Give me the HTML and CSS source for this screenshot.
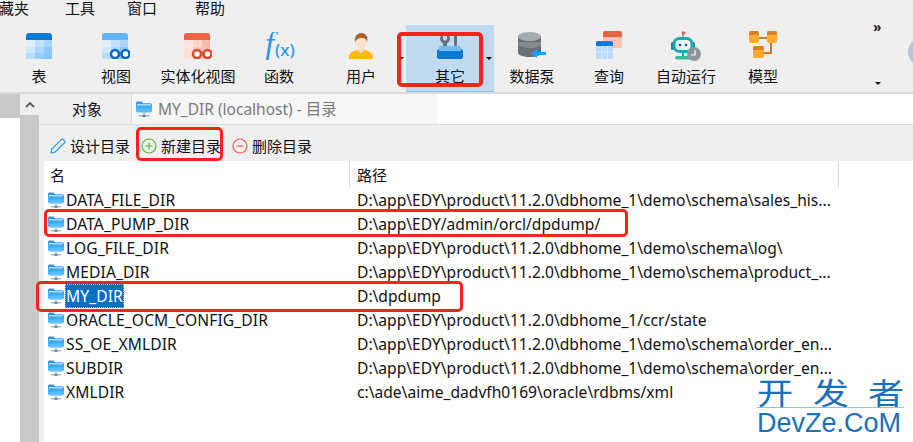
FILE: index.html
```html
<!DOCTYPE html>
<html lang="zh">
<head>
<meta charset="utf-8">
<title>MY_DIR (localhost) - 目录</title>
<link rel="stylesheet" href="styles.css">
</head>
<body>
<svg class="defs" width="0" height="0" aria-hidden="true">
  <defs>
    <linearGradient id="fold" x1="0" y1="0" x2="0" y2="1"><stop offset="0" stop-color="#1f94ea"/><stop offset="1" stop-color="#62c4fc"/></linearGradient>
    <symbol id="dir" viewBox="0 0 16 17">
      <path d="M0 2a1.5 1.5 0 0 1 1.5-1.5h4L7 2.2h7.500a1.500 1.500 0 0 1 1.500 1.500V10a1.500 1.500 0 0 1-1.500 1.500h-13A1.500 1.500 0 0 1 0 10z" fill="url(#fold)"/>
      <path d="M1 3.800h14" stroke="#e4f4ff" stroke-width="1"/>
      <path d="M8 11.500v3M2.500 14.800h11" stroke="#7f99ad" stroke-width="1"/>
      <rect x="6.500" y="13.800" width="3" height="2.200" fill="#5f86a6"/>
    </symbol>
    <symbol id="grid" viewBox="0 0 26 26">
      <rect width="26" height="26" rx="3" fill="#b8dcff"/>
      <rect y="7" width="9" height="7" fill="#e0f0ff"/><rect x="9" y="7" width="9" height="7" fill="#c2e1ff"/><rect x="18" y="7" width="8" height="7" fill="#a9d4fd"/>
      <rect y="14" width="9" height="6" fill="#cfe7ff"/><rect x="9" y="14" width="9" height="6" fill="#aed7ff"/><rect x="18" y="14" width="8" height="6" fill="#8fc9fb"/>
      <rect y="20" width="9" height="6" fill="#b8dcff"/><rect x="9" y="20" width="9" height="6" fill="#97ccfd"/><rect x="18" y="20" width="8" height="6" fill="#8cc6f8"/>
    </symbol>
  </defs>
</svg>
<div class="page">
  <nav class="menu">
    <span class="menu-first">藏夹</span><span class="menu-tools">工具</span><span class="menu-window">窗口</span><span class="menu-help">帮助</span>
  </nav>

  <section class="toolbar">
    <div class="tool">
      <svg class="ico" viewBox="0 0 26 26"><use href="#grid"/><path d="M0 7V3a3 3 0 0 1 3-3h20a3 3 0 0 1 3 3v4z" fill="#0a7bd6"/></svg>
      <span>表</span>
    </div>
    <div class="tool">
      <svg class="ico" viewBox="0 0 28 26"><use href="#grid" width="26" height="26"/><path d="M0 7V3a3 3 0 0 1 3-3h20a3 3 0 0 1 3 3v4z" fill="#62b4f4"/><circle cx="13" cy="21" r="4" fill="#fff" stroke="#0a6cc0" stroke-width="2.600"/><circle cx="23.500" cy="21" r="4" fill="#fff" stroke="#0a6cc0" stroke-width="2.600"/><path d="M16 20h4" stroke="#0a6cc0" stroke-width="2"/></svg>
      <span>视图</span>
    </div>
    <div class="tool">
      <svg class="ico" viewBox="0 0 28 26"><rect width="26" height="26" rx="3" fill="#fbc4b6"/><rect y="7" width="9" height="7" fill="#fde6df"/><rect x="9" y="7" width="9" height="7" fill="#fcd6cb"/><rect x="18" y="7" width="8" height="7" fill="#f9b9a8"/><rect y="14" width="9" height="12" fill="#fde0d8"/><path d="M0 7V3a3 3 0 0 1 3-3h20a3 3 0 0 1 3 3v4z" fill="#ee6246"/><circle cx="13" cy="21" r="4" fill="#fff" stroke="#d9492e" stroke-width="2.600"/><circle cx="23.500" cy="21" r="4" fill="#fff" stroke="#d9492e" stroke-width="2.600"/><path d="M16 20h4" stroke="#d9492e" stroke-width="2"/></svg>
      <span>实体化视图</span>
    </div>
    <div class="tool">
      <svg class="ico ico-fx" viewBox="0 0 34 28"><text class="fx-f" x="3" y="23">f</text><text class="fx-x" x="13" y="24">(x)</text></svg>
      <span>函数</span>
    </div>
    <div class="tool">
      <svg class="ico ico-user" viewBox="0 0 24 26"><path d="M0 26v-2c0-4 4-6 8-7l4 2 4-2c4 1 8 3 8 7v2z" fill="#fdb813"/><path d="M9 14h6v4l-3 2-3-2z" fill="#f6d9c0"/><ellipse cx="12" cy="9" rx="6" ry="7.500" fill="#fbe3d0"/><path d="M6 9C5 3 9 0 12 0s8 2 6 9c-1-3-2-4-4-4-3 0-6 0-8 4z" fill="#a8622c"/></svg>
      <span>用户</span>
    </div>
    <div class="tool tool-on">
      <svg class="ico ico-other" viewBox="0 0 26 26"><path d="M6 0v5l2 2 2-2V0c2 1 3 3 3 5s-2 4-3 4.500V16H6V9.500C5 9 3 7 3 5s1-4 3-5z" fill="#6d7278"/><path d="M17 0h3v9l-.500 7h-2L17 9z" fill="#6d7278"/><rect x="0" y="15" width="26" height="10" rx="2" fill="#0f78d4"/><path d="M2 14a2 2 0 0 1 2-2h18a2 2 0 0 1 2 2v3H2z" fill="#72bdf6"/></svg>
      <span>其它</span>
    </div>
    <div class="tool">
      <svg class="ico ico-pump" viewBox="0 0 28 26"><path d="M0 4v17c0 2 6 4 12 4 7 0 11-2 11-4V4z" fill="#6a6f75"/><path d="M0 12c0 2 6 4 12 4s11-2 11-4v-2H0z" fill="#85898e"/><ellipse cx="11.500" cy="4.500" rx="11.500" ry="4.500" fill="#a8abae"/><path d="M28 20h-9v-3l-6 4.500 6 4.500v-3h9z" fill="#2a9bea"/></svg>
      <span>数据泵</span>
    </div>
    <div class="tool">
      <svg class="ico ico-query" viewBox="0 0 26 28"><rect x="7" y="0" width="19" height="17" rx="2" fill="#fdc5b6"/><path d="M7 6V2a2 2 0 0 1 2-2h15a2 2 0 0 1 2 2v4z" fill="#ea6244"/><rect x="0" y="10" width="17" height="18" rx="2" fill="#b7dcff"/><path d="M0 15v-3a2 2 0 0 1 2-2h13a2 2 0 0 1 2 2v3z" fill="#0a78d6"/><path d="M6 15v13M11.500 15v13M0 21h17" stroke="#d9ecff" stroke-width="1"/></svg>
      <span>查询</span>
    </div>
    <div class="tool">
      <svg class="ico ico-robot" viewBox="0 0 30 30"><path d="M12 1v6" stroke="#7d8a90" stroke-width="1.500"/><circle cx="12.500" cy="2" r="1.800" fill="#ee5a4a"/><rect x="0" y="11" width="3" height="8" rx="1.500" fill="#15828f"/><rect x="21" y="11" width="3" height="8" rx="1.500" fill="#15828f"/><rect x="1.500" y="6" width="21" height="16" rx="7" fill="#1ea7ae"/><rect x="4.500" y="9" width="15" height="10" rx="4" fill="#e8f4fa"/><circle cx="9" cy="14" r="1.300" fill="#1c4e80"/><circle cx="15" cy="14" r="1.300" fill="#1c4e80"/><path d="M12 22v3" stroke="#1ea7ae" stroke-width="2"/><rect x="4" y="25" width="16" height="3.500" rx="1.700" fill="#35bd9c"/><circle cx="23" cy="23" r="7" fill="#8f979c"/><path d="M24 19v5h-4" fill="none" stroke="#fff" stroke-width="1.200"/></svg>
      <span>自动运行</span>
    </div>
    <div class="tool">
      <svg class="ico ico-model" viewBox="0 0 28 28"><path d="M9 7h10M22 12v10h-9" fill="none" stroke="#c87a34" stroke-width="2"/><rect x="0" y="0" width="10" height="12" rx="2" fill="#ffab2e"/><rect x="18" y="0" width="10" height="12" rx="2" fill="#ffab2e"/><rect x="4" y="15" width="11" height="12" rx="2" fill="#ffab2e"/><path d="M0 4V2a2 2 0 0 1 2-2h6a2 2 0 0 1 2 2v2zM18 4V2a2 2 0 0 1 2-2h6a2 2 0 0 1 2 2v2zM4 19v-2a2 2 0 0 1 2-2h7a2 2 0 0 1 2 2v2z" fill="#d9812c"/></svg>
      <span>模型</span>
    </div>
  </section>

  <main class="main">
    <div class="gutter"><div class="gutter-block"></div></div>
    <div class="rail">
      <div class="rail-head"><svg class="chev" viewBox="0 0 10 6"><path d="M1 5l4-4 4 4" fill="none" stroke="#555b62" stroke-width="1.800"/></svg></div>
    </div>
    <div class="content">
      <div class="tabs">
        <div class="tab-objects">对象</div>
        <div class="tab-active"><svg class="dir-ico" viewBox="0 0 16 17"><use href="#dir"/></svg><span>MY_DIR (localhost) - 目录</span></div>
      </div>
      <div class="actions">
        <div class="act"><svg class="act-ico" viewBox="0 0 16 16"><path d="M1 15l.800-4L11.500 1.300a1 1 0 0 1 1.400 0l1.800 1.800a1 1 0 0 1 0 1.400L5 14.200z" fill="none" stroke="#2f9be6" stroke-width="1.200"/></svg><span>设计目录</span></div>
        <div class="act"><svg class="act-ico" viewBox="0 0 16 16"><circle cx="8" cy="8" r="7" fill="none" stroke="#5cb531" stroke-width="1.200"/><path d="M8 4.500v7M4.500 8h7" stroke="#5cb531" stroke-width="1.200"/></svg><span>新建目录</span></div>
        <div class="act"><svg class="act-ico" viewBox="0 0 16 16"><circle cx="8" cy="8" r="7" fill="none" stroke="#f0584e" stroke-width="1.200"/><path d="M4.500 8h7" stroke="#f0584e" stroke-width="1.200"/></svg><span>删除目录</span></div>
      </div>
      <div class="list">
        <div class="head"><div class="h-name">名</div><div class="h-path">路径</div></div>
        <div class="row"><div class="c-name"><svg class="dir-ico" viewBox="0 0 16 17"><use href="#dir"/></svg><span>DATA_FILE_DIR</span></div><div class="c-path">D:\app\EDY\product\11.2.0\dbhome_1\demo\schema\sales_his...</div></div>
        <div class="row"><div class="c-name"><svg class="dir-ico" viewBox="0 0 16 17"><use href="#dir"/></svg><span>DATA_PUMP_DIR</span></div><div class="c-path">D:\app\EDY/admin/orcl/dpdump/</div></div>
        <div class="row"><div class="c-name"><svg class="dir-ico" viewBox="0 0 16 17"><use href="#dir"/></svg><span>LOG_FILE_DIR</span></div><div class="c-path">D:\app\EDY\product\11.2.0\dbhome_1\demo\schema\log\</div></div>
        <div class="row"><div class="c-name"><svg class="dir-ico" viewBox="0 0 16 17"><use href="#dir"/></svg><span>MEDIA_DIR</span></div><div class="c-path">D:\app\EDY\product\11.2.0\dbhome_1\demo\schema\product_...</div></div>
        <div class="row"><div class="c-name"><svg class="dir-ico" viewBox="0 0 16 17"><use href="#dir"/></svg><span class="sel">MY_DIR</span></div><div class="c-path">D:\dpdump</div></div>
        <div class="row"><div class="c-name"><svg class="dir-ico" viewBox="0 0 16 17"><use href="#dir"/></svg><span>ORACLE_OCM_CONFIG_DIR</span></div><div class="c-path">D:\app\EDY\product\11.2.0\dbhome_1/ccr/state</div></div>
        <div class="row"><div class="c-name"><svg class="dir-ico" viewBox="0 0 16 17"><use href="#dir"/></svg><span>SS_OE_XMLDIR</span></div><div class="c-path">D:\app\EDY\product\11.2.0\dbhome_1\demo\schema\order_en...</div></div>
        <div class="row"><div class="c-name"><svg class="dir-ico" viewBox="0 0 16 17"><use href="#dir"/></svg><span>SUBDIR</span></div><div class="c-path">D:\app\EDY\product\11.2.0\dbhome_1\demo\schema\order_en...</div></div>
        <div class="row"><div class="c-name"><svg class="dir-ico" viewBox="0 0 16 17"><use href="#dir"/></svg><span>XMLDIR</span></div><div class="c-path">c:\ade\aime_dadvfh0169\oracle\rdbms/xml</div></div>
      </div>
    </div>
  </main>

  <i class="caret caret-a"></i>
  <i class="caret caret-b"></i>
  <i class="caret caret-c"></i>
  <span class="more">»</span>
  <div class="avatar"></div>

  <div class="mark mark-other"></div>
  <div class="mark mark-new"></div>
  <div class="mark mark-pump"></div>
  <div class="mark mark-mydir"></div>

  <div class="watermark">
    <div class="wm-cn"><span>开</span><span>发</span><span>者</span></div>
    <div class="wm-en">DevZe.CoM</div>
  </div>
</div>
</body>
</html>
```

FILE: styles.css
```css
* { box-sizing: border-box; }
html, body { margin: 0; padding: 0; }
body { width: 913px; height: 442px; overflow: hidden; background: #fff; }
.defs { position: absolute; }
.page {
  position: relative;
  width: 913px;
  height: 442px;
  display: flex;
  flex-direction: column;
  overflow: hidden;
  font: 15px/20px "Noto Sans", "Noto Sans CJK SC", sans-serif;
  color: #111;
  background: #efefef;
}

/* menu */
.menu { height: 18px; display: flex; line-height: 17px; margin-left: -1px; }
.menu-first { width: 66px; }
.menu-tools { width: 62px; }
.menu-window { width: 68px; }

/* toolbar */
.toolbar {
  height: 76px;
  padding-top: 7px;
  border-bottom: 2px solid #dcdcdc;
  display: grid;
  grid-template-columns: 78px 76px 88px 74px 90px 88px 76px 78px 76px 78px;
  justify-content: start;
}
.tool { display: flex; flex-direction: column; align-items: center; position: relative; height: 67px; white-space: nowrap; }
.tool span { position: absolute; top: 41px; }
.tool-on { background: #bfdbf2; border-bottom: 1px solid #8cc6f0; }
.ico { width: 28px; height: 26px; margin-top: 8px; }
.ico-fx { width: 34px; height: 28px; margin-top: 7px; }
.fx-f { font: italic 33px "Liberation Serif", serif; fill: #2f97e8; }
.fx-x { font: 500 17px "Noto Sans", sans-serif; fill: #2f97e8; }
.ico-user { width: 24px; height: 26px; }
.ico-other { width: 26px; height: 26px; margin-top: 9px; }
.ico-pump { width: 28px; height: 26px; margin-top: 7px; }
.ico-query { width: 26px; height: 28px; margin-top: 6px; }
.ico-robot { width: 30px; height: 30px; margin-top: 6px; }
.ico-model { width: 28px; height: 28px; margin-top: 6px; }

/* main */
.main { flex: 1; display: flex; min-height: 0; }
.gutter { width: 20px; background: #fff; }
.gutter-block { height: 24px; background: #c9c9c9; }
.rail { width: 19px; background: #c9c9c9; }
.rail-head { height: 21px; background: #efefef; padding: 8px 0 0 5px; }
.chev { display: block; width: 10px; height: 6px; }
.content { flex: 1; display: flex; flex-direction: column; min-width: 0; }

.tabs { height: 31px; display: flex; background: #fff; border-bottom: 1px solid #dcdcdc; }
.tab-objects { width: 92px; background: #efefef; padding: 5px 0 0 33px; }
.tab-active {
  width: 306px;
  background: #f6f6f6;
  border-left: 1px solid #dcdcdc;
  display: flex;
  align-items: center;
  gap: 4px;
  padding-left: 4px;
  color: #7b7b7b;
  font-size: 15.5px;
}

.actions { height: 36px; display: flex; align-items: center; padding: 5px 0 0 11px; }
.act { display: flex; align-items: center; gap: 4px; margin-right: 11px; }
.act-ico { width: 16px; height: 16px; display: block; }

.list { flex: 1; margin-left: 5px; background: #fff; }
.head { height: 27px; display: grid; grid-template-columns: 306px 489px; }
.h-name { padding: 4px 0 0 6px; border-right: 1px solid #dcdcdc; }
.h-path { padding: 4px 0 0 7px; border-right: 1px solid #dcdcdc; }
.row { height: 24px; display: grid; grid-template-columns: 306px 1fr; align-items: center; white-space: nowrap; font-size: 15.6px; }
.c-name { display: flex; align-items: center; padding-left: 4px; letter-spacing: .1px; }
.c-path { padding-left: 7px; }
.dir-ico { width: 16px; height: 17px; flex: none; margin-right: 2px; display: block; }
.sel {
  background: #0a6fc4;
  color: #fff;
  padding: 2px 1px;
  margin-left: -1px;
  outline: 1px dotted #e9a15f;
  outline-offset: -1px;
}

/* small overlays */
.caret { position: absolute; width: 0; height: 0; border: 3px solid transparent; border-top-color: #111; border-bottom: 0; }
.caret-a { left: 398px; top: 57px; }
.caret-b { left: 486px; top: 57px; }
.caret-c { left: 875px; top: 82px; }
.more { position: absolute; left: 873px; top: 17px; font: bold 15px/20px "Liberation Sans", sans-serif; color: #111; }
.avatar { position: absolute; left: 908px; top: 38px; width: 28px; height: 28px; border-radius: 50%; background: #b9c6d6; }

/* hand-drawn red highlights */
.mark { position: absolute; border: 3px solid #f9231b; border-radius: 5px; }
.mark-other { left: 397px; top: 32px; width: 86px; height: 55px; border-width: 4px; }
.mark-new { left: 136px; top: 127px; width: 87px; height: 34px; }
.mark-pump { left: 44px; top: 209px; width: 584px; height: 28px; }
.mark-mydir { left: 36px; top: 281px; width: 427px; height: 31px; }

/* watermark */
.watermark { position: absolute; left: 757px; top: 375px; width: 147px; color: #1b70b9; }
.wm-cn {
  display: flex;
  justify-content: space-between;
  font: 30px/32px "Noto Sans CJK SC", sans-serif;
  height: 33px;
  border-bottom: 1px solid #86c8ee;
}
.wm-cn span { display: block; width: 36px; text-align: center; transform: scaleX(1.2); }
.wm-en { font: 27px/30px "Liberation Sans", sans-serif; white-space: nowrap; }
```
